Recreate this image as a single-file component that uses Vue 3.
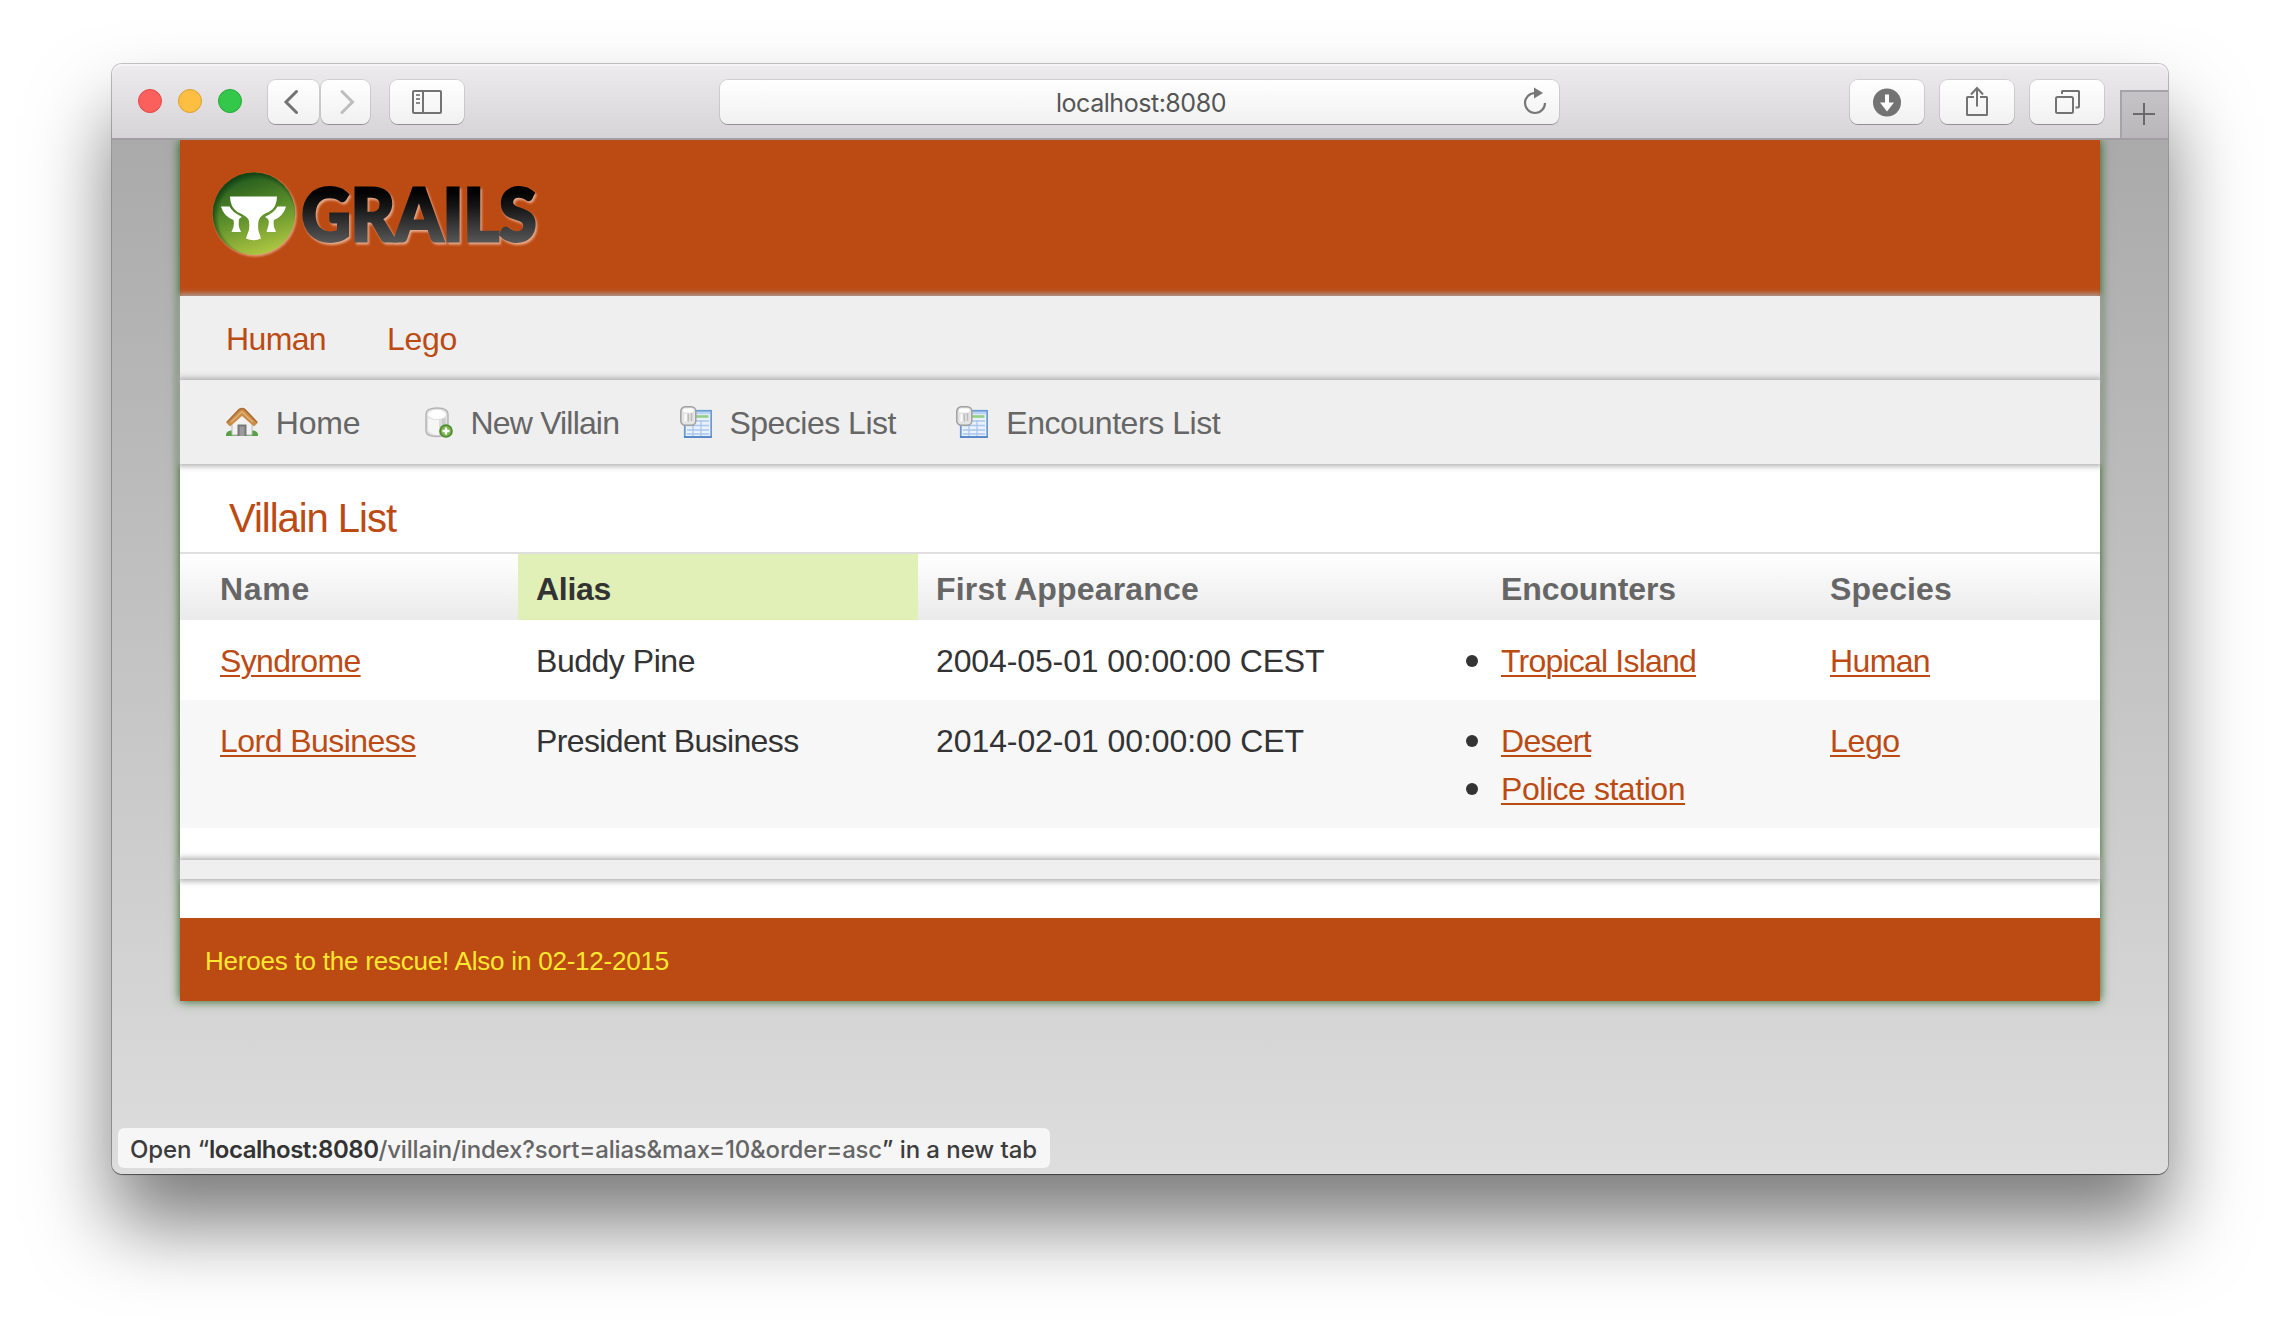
<script setup>
// Sets the tracking of a text run so that its advance width equals the given value.
const vFit = {
  mounted(el, { value }) {
    const natural = el.getBoundingClientRect().width
    const count = el.textContent.length
    el.style.letterSpacing = `${(value - natural) / count}px`
  },
}

const speciesLinks = [
  { label: 'Human', w: 100 },
  { label: 'Lego', w: 70 },
]

const actions = [
  { label: 'Home', icon: 'home', w: 84.5 },
  { label: 'New Villain', icon: 'add', w: 148.5 },
  { label: 'Species List', icon: 'table', w: 166.5 },
  { label: 'Encounters List', icon: 'table', w: 214 },
]

const columns = [
  { label: 'Name', w: 90 },
  { label: 'Alias', w: 75, active: true },
  { label: 'First Appearance', w: 263 },
  { label: 'Encounters', w: 175 },
  { label: 'Species', w: 122 },
]

const villains = [
  {
    name: { label: 'Syndrome', w: 140.6 },
    alias: { label: 'Buddy Pine', w: 159 },
    first: { label: '2004-05-01 00:00:00 CEST', w: 388.5 },
    encounters: [{ label: 'Tropical Island', w: 195 }],
    species: { label: 'Human', w: 100 },
  },
  {
    name: { label: 'Lord Business', w: 195.8 },
    alias: { label: 'President Business', w: 262.5 },
    first: { label: '2014-02-01 00:00:00 CET', w: 368 },
    encounters: [
      { label: 'Desert', w: 90 },
      { label: 'Police station', w: 184 },
    ],
    species: { label: 'Lego', w: 69.8 },
  },
]
</script>

<template>
  <div class="desktop">
    <div class="window">
      <div class="toolbar">
        <div class="lights">
          <i class="light red"></i><i class="light amber"></i><i class="light green"></i>
        </div>
        <div class="tb-btn back">
          <svg width="52" height="44" viewBox="0 0 52 44"><path d="M28.500 11.500 L18 22 L28.500 32.500" fill="none" stroke="#737373" stroke-width="3" stroke-linecap="round" /></svg>
        </div>
        <div class="tb-btn forward">
          <svg width="50" height="44" viewBox="0 0 50 44"><path d="M21 11.500 L31.500 22 L21 32.500" fill="none" stroke="#bdbdbd" stroke-width="3" stroke-linecap="round" /></svg>
        </div>
        <div class="tb-btn sidebar">
          <svg width="74" height="44" viewBox="0 0 74 44" fill="none" stroke="#737373" stroke-width="2">
            <rect x="23" y="11" width="28" height="22" rx="1" />
            <path d="M33 11V33" />
            <path d="M26 15h4M26 19h4M26 23h4" stroke="#8a8a8a" />
          </svg>
        </div>
        <div class="address">
          <span v-fit="170">localhost:8080</span>
          <svg class="reload" width="30" height="32" viewBox="0 0 30 32">
            <path d="M15 8 A10 10 0 1 0 25 18" fill="none" stroke="#777" stroke-width="2.200" />
            <path d="M14 2.500 L23 8 L14 13.500Z" fill="#777" />
          </svg>
        </div>
        <div class="tb-btn download">
          <svg width="74" height="44" viewBox="0 0 74 44">
            <circle cx="37" cy="22.500" r="14" fill="#737373" />
            <path d="M35 14.500h4v8h5L37 31.500 30 22.500h5z" fill="#fbfbfb" />
          </svg>
        </div>
        <div class="tb-btn share">
          <svg width="74" height="44" viewBox="0 0 74 44" fill="none" stroke="#737373" stroke-width="2">
            <path d="M34 17H27.500Q27 17 27 17.500V34.500Q27 35 27.500 35H46.500Q47 35 47 34.500V17.500Q47 17 46.500 17H40" />
            <path d="M37 26.500V8M31 14.500 37 8 43 14.500" />
          </svg>
        </div>
        <div class="tb-btn tabs">
          <svg width="74" height="44" viewBox="0 0 74 44" fill="none" stroke="#737373" stroke-width="2">
            <rect x="26" y="17" width="17" height="16" rx="1.500" />
            <path d="M32 14V11.500Q32 11 32.500 11H48.500Q49 11 49 11.500V26.500Q49 27.500 48 27.500H45.500" />
          </svg>
        </div>
        <div class="new-tab">
          <svg width="46" height="46" viewBox="0 0 46 46"><path d="M11 22h22M22 11v22" stroke="#6b696c" stroke-width="2" fill="none" /></svg>
        </div>
      </div>

      <div class="viewport">
        <div class="page">
          <header class="brand">
            <svg width="350" height="136" viewBox="0 0 350 136">
              <defs>
                <linearGradient id="disc" x1=".35" y1="0" x2=".65" y2="1">
                  <stop offset="0" stop-color="#1d551c" />
                  <stop offset=".5" stop-color="#5d8f2b" />
                  <stop offset="1" stop-color="#b2c942" />
                </linearGradient>
                <linearGradient id="ink" gradientUnits="userSpaceOnUse" x1="0" y1="30" x2="0" y2="83">
                  <stop offset="0" stop-color="#000" />
                  <stop offset=".3" stop-color="#141414" />
                  <stop offset="1" stop-color="#585858" />
                </linearGradient>
                <radialGradient id="rim" cx=".53" cy=".54" r=".53">
                  <stop offset=".86" stop-color="#0b3a10" stop-opacity="0" />
                  <stop offset="1" stop-color="#0b3a10" stop-opacity=".7" />
                </radialGradient>
                <filter id="soft"><feGaussianBlur stdDeviation=".8" /></filter>
              </defs>
              <circle cx="55.200" cy="55" r="41.500" fill="#e3a07f" filter="url(#soft)" />
              <circle cx="54" cy="53.700" r="41.300" fill="url(#disc)" />
              <circle cx="54" cy="53.700" r="41.300" fill="url(#rim)" />
              <g fill="#fff">
                <path d="M30 36.500H77Q77 47 69.500 51.500Q59.500 55.500 58.500 61Q57.500 69 59 72.500Q60 75.500 61 78.500Q53.500 82 46 78.500Q47 75.500 48 72.500Q50 69 49 61Q48 56.500 37.500 52Q30 47 30 36.500Z" />
                <path d="M21 46.500H29.500Q32 52 42 57Q38.500 58.500 38.800 61Q38.500 64 39 67L41 72H31.500L33.500 67Q34.500 63 33.500 60Q23.500 56 21 46.500Z" />
                <path d="M86 46.500H77.500Q75 52 65 57Q68.500 58.500 68.800 61Q69 64 68 67L66.500 72H76L74 67Q73 63 74 60Q83.500 56 86 46.500Z" />
              </g>
              <g class="wordmark">
                <text x="103" y="82.500" textLength="235" lengthAdjust="spacingAndGlyphs" fill="#e9ab8b" stroke="#e9ab8b" filter="url(#soft)">GRAILS</text>
                <text x="101.500" y="81" textLength="235" lengthAdjust="spacingAndGlyphs" fill="url(#ink)" stroke="url(#ink)">GRAILS</text>
              </g>
            </svg>
          </header>

          <nav class="nav species-nav">
            <a v-for="s in speciesLinks" :key="s.label"><span v-fit="s.w">{{ s.label }}</span></a>
          </nav>

          <nav class="nav action-nav">
            <a v-for="a in actions" :key="a.label">
              <svg v-if="a.icon === 'home'" width="32" height="32" viewBox="0 0 32 32">
                <path d="M0 29Q0 25 5 24.500L8 25H24L27 24.500Q32 25 32 29V30H0Z" fill="#57a046" />
                <path d="M6 17 16 7.500 26 17V29H6Z" fill="#f2f2f2" stroke="#bcbcbc" stroke-width="1" />
                <rect x="11.500" y="18.500" width="9" height="11.500" fill="#777" />
                <rect x="13.500" y="20.500" width="5" height="9.500" fill="#9b9b9b" />
                <path d="M0 16.500 12.500 3Q14 1.700 16 1.700T19.500 3L32 16.500 28 20.500 16 10 4 20.500Z" fill="#c98d48" />
                <path d="M1 16.300 13 3.700Q16 1.500 19 3.700L31 16.300" fill="none" stroke="#a96a33" stroke-width="1.300" />
                <path d="M5 16 16 5.800 27 16" fill="none" stroke="#e0b173" stroke-width="1.500" />
              </svg>
              <svg v-else-if="a.icon === 'add'" width="32" height="32" viewBox="0 0 32 32">
                <path d="M5 8Q5 2 16 2T27 8V25Q27 30.500 16 30.500T5 25Z" fill="#dedede" stroke="#b4b4b4" stroke-width="1.400" />
                <path d="M7 12Q11 14.500 18 14V29Q9 29 7 24Z" fill="#f6f6f6" />
                <path d="M21 13.500 24.500 12V25L21 27Z" fill="#cbcbcb" />
                <ellipse cx="16" cy="8.500" rx="9" ry="4.700" fill="#fff" />
                <circle cx="25" cy="25" r="6.800" fill="#4c8a2b" />
                <circle cx="25" cy="25" r="5.200" fill="#79b04f" />
                <path d="M25 21.500V28.500M21.500 25H28.500" stroke="#fff" stroke-width="2.400" />
              </svg>
              <svg v-else width="32" height="32" viewBox="0 0 32 32">
                <rect x="4.800" y="4.800" width="26.400" height="26.400" fill="#e9f1fb" stroke="#6a9ad6" stroke-width="1.800" />
                <rect x="6" y="6" width="24" height="2.200" fill="#b8d2f2" />
                <path d="M14 10.500H28.500" stroke="#92cf86" stroke-width="2.600" />
                <path d="M7 15H29M7 19.500H29M7 24H29M7 28H29M13 18V30M21 14V30" stroke="#a9c6ec" stroke-width="1.300" />
                <path d="M4 31H31.500" stroke="#4f82c4" stroke-width="1.600" />
                <rect x=".8" y=".8" width="15" height="18.500" rx="4.500" fill="#e4e4e4" stroke="#a0a0a0" stroke-width="1.500" />
                <rect x="3" y="2.500" width="10.500" height="4" rx="2" fill="#fff" />
                <path d="M5.500 8V15.500" stroke="#fff" stroke-width="2" />
                <path d="M8.300 7.500V15.500M11.500 7V15" stroke="#bdbdbd" stroke-width="1.600" />
              </svg>
              <span v-fit="a.w">{{ a.label }}</span>
            </a>
          </nav>

          <main class="list">
            <h1><span v-fit="167">Villain List</span></h1>
            <table>
              <colgroup>
                <col class="c-name" /><col class="c-alias" /><col class="c-first" /><col class="c-enc" /><col />
              </colgroup>
              <thead>
                <tr>
                  <th v-for="c in columns" :key="c.label" :class="{ active: c.active }">
                    <span v-fit="c.w">{{ c.label }}</span>
                  </th>
                </tr>
              </thead>
              <tbody>
                <tr v-for="v in villains" :key="v.name.label">
                  <td><a v-fit="v.name.w">{{ v.name.label }}</a></td>
                  <td><span v-fit="v.alias.w">{{ v.alias.label }}</span></td>
                  <td><span v-fit="v.first.w">{{ v.first.label }}</span></td>
                  <td>
                    <ul>
                      <li v-for="e in v.encounters" :key="e.label"><a v-fit="e.w">{{ e.label }}</a></li>
                    </ul>
                  </td>
                  <td><a v-fit="v.species.w">{{ v.species.label }}</a></td>
                </tr>
              </tbody>
            </table>
          </main>

          <div class="pagination"></div>

          <footer class="footer"><span v-fit="464">Heroes to the rescue! Also in 02-12-2015</span></footer>
        </div>

        <div class="status">
          <span v-fit="79" class="dark">Open “</span><b v-fit="169.5">localhost:8080</b><span v-fit="503">/villain/index?sort=alias&amp;max=10&amp;order=asc</span><span v-fit="155" class="dark">” in a new tab</span>
        </div>
      </div>
    </div>
  </div>
</template>

<style>
body {
  background: #fff;
}
</style>

<style scoped>
.desktop {
  box-sizing: border-box;
  width: 2280px;
  height: 1334px;
  padding: 64px 112px 0;
  overflow: hidden;
  background: #fff;
  font-family: "Liberation Sans", Arial, sans-serif;
  font-size: 32px;
  line-height: 48px;
  color: #333;
}
.window {
  display: flex;
  flex-direction: column;
  height: 1110px;
  border-radius: 10px;
  box-shadow: 0 0 0 1px rgba(0, 0, 0, 0.22), 0 1px 1px rgba(0, 0, 0, 0.4), 0 50px 80px rgba(0, 0, 0, 0.52);
}

/* Browser toolbar */
.toolbar {
  display: flex;
  align-items: flex-start;
  box-sizing: border-box;
  height: 76px;
  flex: none;
  border-bottom: 2px solid #a09ea2;
  border-radius: 10px 10px 0 0;
  background: linear-gradient(#edebee, #d6d4d7);
  box-shadow: inset 0 2px 0 #f6f5f6;
}
.lights {
  display: flex;
  gap: 16px;
  padding: 25px 26px 0;
}
.light {
  box-sizing: border-box;
  width: 24px;
  height: 24px;
  border-radius: 50%;
}
.red { background: #fc605c; border: 1px solid #e04844; }
.amber { background: #fdbf41; border: 1px solid #de9f34; }
.green { background: #34c84a; border: 1px solid #27a837; }
.tb-btn,
.address {
  box-sizing: border-box;
  height: 44px;
  margin-top: 16px;
  border-radius: 8px;
  background: linear-gradient(#fff, #f1f1f1);
  box-shadow: 0 0 0 1px rgba(0, 0, 0, 0.1), 0 1px 0 0 rgba(0, 0, 0, 0.26);
}
.tb-btn svg {
  display: block;
}
.back { width: 51px; }
.forward { width: 49px; margin-left: 2px; }
.sidebar { width: 74px; margin-left: 20px; }
.address {
  position: relative;
  display: flex;
  justify-content: center;
  width: 839px;
  margin-left: 256px;
  padding-left: 3px;
  font-family: Inter, "Open Sans", sans-serif;
  font-size: 25px;
  line-height: 47px;
  color: #555;
}
.reload {
  position: absolute;
  right: 9px;
  top: 5px;
}
.download { width: 74px; margin-left: 291px; }
.share { width: 74px; margin-left: 16px; }
.tabs { width: 74px; margin-left: 16px; }
.new-tab {
  box-sizing: border-box;
  width: 48px;
  height: 48px;
  margin: 26px 0 0 auto;
  border: solid #a5a3a7;
  border-width: 2px 0 0 2px;
  background: linear-gradient(#c6c3c7, #b9b7ba);
}

/* Page */
.viewport {
  position: relative;
  flex: 1;
  overflow: hidden;
  padding: 0 68px;
  border-radius: 0 0 10px 10px;
  background: linear-gradient(#aaa, #ddd);
}
.page {
  height: 861px;
  background: #fff;
  box-shadow: 0 0 10px #255b17;
}
.brand {
  box-sizing: border-box;
  height: 156px;
  padding: 20px 0 0 20px;
  background: #bc4a13;
}
.brand svg {
  display: block;
  overflow: visible;
}
.wordmark {
  font-family: Lato, "Open Sans", sans-serif;
  font-size: 72px;
  font-weight: 900;
  stroke-width: 3px;
}
.nav {
  display: flex;
  box-sizing: border-box;
  height: 84px;
  padding: 19px 0 0 46px;
  background: #efefef;
  box-shadow: 0 0 6px 2px #aaa;
}
.species-nav {
  gap: 61px;
  color: #bc4a13;
}
.action-nav {
  gap: 60.5px;
  color: #666;
}
.action-nav a {
  display: flex;
}
.action-nav svg {
  margin: 7px 17.8px 0 0;
}
.list {
  height: 396px;
}
h1 {
  margin: 0;
  padding: 30px 0 10px 49px;
  font-size: 40px;
  font-weight: 400;
  line-height: 48px;
  color: #bc4a13;
}
table {
  width: 1920px;
  border-top: 2px solid #dfdfdf;
  border-collapse: separate;
  border-spacing: 0;
  table-layout: fixed;
}
.c-name { width: 338px; }
.c-alias { width: 400px; }
.c-first { width: 565px; }
.c-enc { width: 329px; }
thead tr {
  background: linear-gradient(#fff, #eaeaea);
}
th {
  height: 48px;
  padding: 11px 0 7px 18px;
  text-align: left;
  font-weight: 700;
  color: #666;
}
th.active {
  background: #e1f0b7;
  color: #333;
}
td {
  padding: 17px 0 15px 18px;
  vertical-align: top;
}
th:first-child,
td:first-child {
  padding-left: 40px;
}
tbody tr:nth-child(even) {
  background: #f7f7f7;
}
td a {
  color: #bc4a13;
  text-decoration: underline;
  text-decoration-thickness: 2px;
  text-underline-offset: 3px;
}
ul {
  margin: 0;
  padding: 0;
  list-style: none;
}
li {
  position: relative;
}
li::before {
  content: "";
  position: absolute;
  left: -35px;
  top: 18px;
  width: 12px;
  height: 12px;
  border-radius: 50%;
  background: #333;
}
.pagination {
  height: 19px;
  background: #efefef;
  box-shadow: 0 0 6px 2px #aaa;
}
.footer {
  box-sizing: border-box;
  height: 83px;
  margin-top: 39px;
  padding: 25px 0 0 25px;
  background: #bc4a13;
  font-size: 26px;
  line-height: 36px;
  color: #fde72f;
}
.status {
  position: absolute;
  left: 6px;
  bottom: 6px;
  box-sizing: border-box;
  width: 932px;
  height: 40px;
  padding-left: 12px;
  border-radius: 6px;
  background: #f6f6f6;
  font-family: Inter, "Open Sans", sans-serif;
  font-size: 24px;
  font-weight: 500;
  line-height: 44px;
  white-space: pre;
  color: #666;
}
.status .dark { color: #3c3c3c; }
.status b { font-weight: 600; color: #333; }
</style>
